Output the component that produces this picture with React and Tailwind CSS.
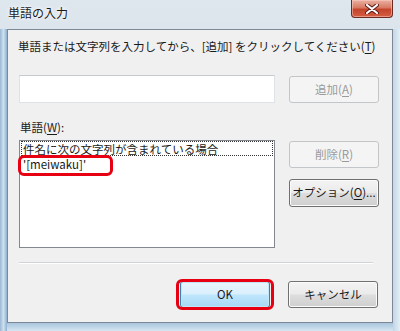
import React from 'react';

const FONT = { fontFamily: '"Noto Sans CJK JP", "Noto Sans", sans-serif' };

const Mn = ({ children }) => <span className="underline underline-offset-2">{children}</span>;

const Btn = ({ children, disabled, focused, className = '' }) => {
  let look = 'border-[#707070] bg-[linear-gradient(#f3f3f3_0%,#ebebeb_48%,#dddddd_52%,#cfcfcf_100%)] text-[#1a1a1a] shadow-[inset_0_0_0_1px_#fbfbfb]';
  if (disabled) look = 'border-[#c2c6c9] bg-[#f4f4f4] text-[#9a9a9a]';
  if (focused) look = 'border-[#3c7fb1] bg-[linear-gradient(#eaf6fd_0%,#d9f0fc_48%,#bee6fd_52%,#a7d9f5_100%)] text-[#1a1a1a] shadow-[inset_0_0_0_1px_#c4e5f6]';
  return (
    <div className={`w-[90px] h-[27px] rounded-[3px] border flex items-center justify-center text-[11.5px] leading-none ${look} ${className}`}>
      {children}
    </div>
  );
};

export default function App() {
  return (
    <div style={FONT} className="w-[400px] h-[331px] overflow-hidden flex flex-col bg-[linear-gradient(180deg,#dfe7ee_0%,#d4dee8_30%,#bcd0e2_100%)] text-[#1a1a1a]">
      {/* Title bar */}
      <div className="h-[29px] flex items-start shrink-0">
        <div className="pl-[8px] pt-[5px] text-[12px] leading-[16px] text-[#1a1a1a] [text-shadow:0_0_5px_#fff,0_0_3px_#fff]">単語の入力</div>
        <div className="flex-1" />
        <div className="mr-[7px] w-[42px] h-[18px] rounded-b-[4px] border border-t-0 border-[#6e2a20] bg-[linear-gradient(180deg,#eab1a3_0%,#d87a63_45%,#c4442c_55%,#d45e42_100%)] flex items-center justify-center shadow-[inset_0_0_0_1px_rgba(255,210,200,0.5)]">
          <svg width="14" height="10" viewBox="0 0 14 10">
            <path d="M2 1 L12 9 M12 1 L2 9" stroke="#5a1a12" strokeWidth="4" strokeLinecap="round" />
            <path d="M2 1 L12 9 M12 1 L2 9" stroke="#ffffff" strokeWidth="2.2" strokeLinecap="round" />
          </svg>
        </div>
      </div>

      <div className="flex flex-1">
        {/* left frame edge */}
        <div className="w-[7px] bg-[linear-gradient(90deg,#9ab8d4,#cfe0ee_50%,#8eb0d0)]" />

        <div className="w-[386px] flex flex-col">
          {/* Client area */}
          <div className="h-[294px] shrink-0 border border-[#7b8895] bg-[#f0f0f0] flex flex-col">
            <p className="mt-[8px] ml-[10px] text-[11.5px] leading-[16px] whitespace-nowrap">
              単語または文字列を入力してから、[追加] をクリックしてください(<Mn>T</Mn>)
            </p>

            <div className="mt-[21px] ml-[11px] flex items-start">
              <div className="w-[256px] h-[28px] bg-white border border-[#dde3e9] border-t-[#c5cbd1]" />
              <Btn disabled className="ml-[14px] mt-[1px]">追加(<Mn>A</Mn>)</Btn>
            </div>

            <div className="mt-[16px] ml-[12px] text-[11.5px] leading-[16px]">単語(<Mn>W</Mn>):</div>

            <div className="mt-[5px] ml-[11px] flex items-start">
              <div className="relative w-[256px] h-[108px] bg-white border border-[#828790] text-[11.5px] leading-[14px]">
                <div className="mx-[1px] px-[1px] h-[15px] border border-dotted border-[#333] whitespace-nowrap">件名に次の文字列が含まれている場合</div>
                <div className="px-[3px] mt-[1px] h-[15px] whitespace-nowrap">'[meiwaku]'</div>
                <div className="absolute left-[-2px] top-[14px] w-[95px] h-[21px] border-[3px] border-[#e60012] rounded-[6px]" />
              </div>
              <div className="ml-[14px] mt-[1px] flex flex-col">
                <Btn disabled>削除(<Mn>R</Mn>)</Btn>
                <Btn className="mt-[11px] h-[28px]">オプション(<Mn>O</Mn>)...</Btn>
              </div>
            </div>

            <div className="mt-[14px] ml-[11px] w-[354px] h-[2px] border-t border-[#d0d4d8] border-b border-b-white" />

            <div className="mt-[17px] flex justify-end pr-[14px] gap-[18px]">
              <div className="relative">
                <Btn focused>OK</Btn>
                <div className="absolute left-[-4px] right-[-4px] top-[-2px] bottom-[-2px] border-[3px] border-[#e60012] rounded-[6px]" />
              </div>
              <Btn>キャンセル</Btn>
            </div>
          </div>
          {/* bottom frame */}
          <div className="flex-1 bg-[linear-gradient(180deg,#a9c4dc,#d6e6f2)]" />
        </div>

        {/* right frame edge */}
        <div className="w-[7px] bg-[linear-gradient(90deg,#c4d6e6,#e4eef6)]" />
      </div>
    </div>
  );
}
